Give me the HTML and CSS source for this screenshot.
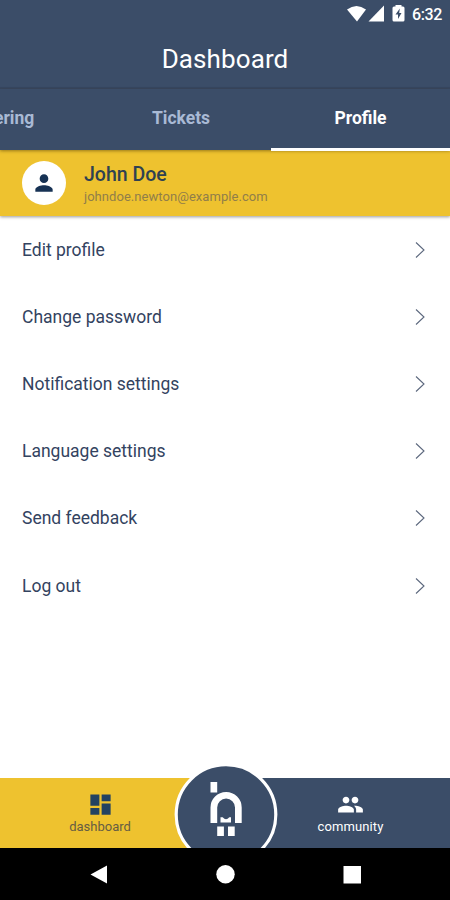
FILE: index.html
```html
<!DOCTYPE html>
<html lang="en">
<head>
<meta charset="utf-8">
<title>Dashboard</title>
<link rel="stylesheet" href="styles.css">
</head>
<body>
<div class="screen">
  <div class="status">
    <svg class="signals" width="60" height="20" viewBox="346 4 60 20">
      <path fill="#fff" d="M347 9.500Q356.500 2.500 366 9.500L357 21.500Z"/>
      <path fill="#fff" d="M384 5.500V21.500H368.500Z"/>
      <path fill="#fff" d="M395.500 6.500V5h6v1.500h1.500q1.500 0 1.500 1.500v12q0 1.500-1.500 1.500h-9q-1.500 0-1.500-1.500V8q0-1.500 1.500-1.500z"/>
      <path fill="#3b4d68" d="M399.800 8.500L395.500 14.500H398V19L401.500 13H399.200Z"/>
    </svg>
    <span class="time">6:32</span>
  </div>
  <header class="title"><h1>Dashboard</h1></header>
  <nav class="tabs">
    <span class="tab tab-cut">ering</span>
    <span class="tab">Tickets</span>
    <span class="tab tab-active">Profile</span>
  </nav>
  <section class="user">
    <div class="avatar">
      <svg width="26" height="26" viewBox="0 0 24 24"><path fill="#173254" d="M12 12c2.210 0 4-1.790 4-4s-1.790-4-4-4-4 1.790-4 4 1.790 4 4 4zm0 2c-2.670 0-8 1.340-8 4v2h16v-2c0-2.660-5.330-4-8-4z"/></svg>
    </div>
    <div class="who">
      <div class="name">John Doe</div>
      <div class="email">johndoe.newton@example.com</div>
    </div>
  </section>
  <main class="menu">
    <div class="row"><span>Edit profile</span><svg class="chev" viewBox="0 0 10 18"><path d="M1 1.500L9 9L1 16.500"/></svg></div>
    <div class="row"><span>Change password</span><svg class="chev" viewBox="0 0 10 18"><path d="M1 1.500L9 9L1 16.500"/></svg></div>
    <div class="row"><span>Notification settings</span><svg class="chev" viewBox="0 0 10 18"><path d="M1 1.500L9 9L1 16.500"/></svg></div>
    <div class="row"><span>Language settings</span><svg class="chev" viewBox="0 0 10 18"><path d="M1 1.500L9 9L1 16.500"/></svg></div>
    <div class="row"><span>Send feedback</span><svg class="chev" viewBox="0 0 10 18"><path d="M1 1.500L9 9L1 16.500"/></svg></div>
    <div class="row"><span>Log out</span><svg class="chev" viewBox="0 0 10 18"><path d="M1 1.500L9 9L1 16.500"/></svg></div>
  </main>
  <footer class="bottom">
    <div class="item item-dash">
      <svg width="27" height="27" viewBox="0 0 24 24"><path fill="#234261" d="M3 13h8V3H3v10zm0 8h8v-6H3v6zm10 0h8V11h-8v10zm0-18v6h8V3h-8z"/></svg>
      <span>dashboard</span>
    </div>
    <div class="item item-comm">
      <svg width="27" height="27" viewBox="0 0 24 24"><path fill="#fff" d="M16 11c1.660 0 2.990-1.340 2.990-3S17.660 5 16 5c-1.660 0-3 1.340-3 3s1.340 3 3 3zm-8 0c1.660 0 2.990-1.340 2.990-3S9.660 5 8 5C6.340 5 5 6.340 5 8s1.340 3 3 3zm0 2c-2.330 0-7 1.170-7 3.500V19h14v-2.500c0-2.330-4.670-3.500-7-3.500zm8 0c-.29 0-.62.020-.97.050 1.160.84 1.970 1.970 1.970 3.450V19h6v-2.500c0-2.330-4.670-3.500-7-3.500z"/></svg>
      <span>community</span>
    </div>
    <svg class="hub" width="104" height="86" viewBox="174 763 104 86">
      <circle cx="226" cy="815.500" r="49.800" fill="#3b4d68" stroke="#fff" stroke-width="3.200"/>
      <path fill="#fff" d="M210.500 783h6.700v10.500h-6.700zM210.500 824V808.500a15.600 15.600 0 0 1 31.200 0V824H235V808.500a8.900 8.900 0 0 0-17.800 0V824zM220.500 823.500V818.300H222.700Q226 822 229.300 818.300H231V823.500ZM217.200 827.500h6.700v9.400h-6.700zM228 827.500h6.700v9.400H228z"/>
    </svg>
  </footer>
  <div class="system">
    <svg width="450" height="52" viewBox="0 848 450 52"><path fill="#fff" d="M90.500 874.500L107 865.500V883.500ZM343.500 866h17.500v17.500h-17.500z"/><circle cx="225.500" cy="874.200" r="9.200" fill="#fff"/></svg>
  </div>
</div>
</body>
</html>
```
FILE: styles.css
```css
* { box-sizing: border-box; }
body { margin: 0; font-family: Roboto, "Liberation Sans", sans-serif; color: #33435f; background: #fff; }
svg { display: block; flex: none; }
.screen { width: 450px; height: 900px; display: flex; flex-direction: column; overflow: hidden; }
.status { height: 28px; background: #3b4d68; display: flex; align-items: center; padding-left: 346px; gap: 6px; color: #fff; }
.time { font-size: 16px; line-height: 28px; padding-top: 1px; font-weight: 500; letter-spacing: -0.4px; }
.title { height: 61px; background: #3b4d68; border-bottom: 2px solid #364661; text-align: center; }
.title h1 { margin: 0; font-size: 26px; line-height: 63px; font-weight: 400; color: #fff; letter-spacing: 0.1px; }
.tabs { height: 61px; flex: none; background: #3b4d68; display: grid; grid-template-columns: 91px 180px 179px; position: relative; box-shadow: 0 1px 3px rgba(70,50,0,.5); z-index: 1; }
.tab { text-align: center; font-size: 17.5px; line-height: 59px; font-weight: 700; color: #a9bad5; }
.tab-cut { text-align: left; margin-left: -6px; }
.tab-active { color: #fff; border-bottom: 3px solid #fff; }
.user { height: 66px; flex: none; background: #eec22f; display: flex; align-items: center; padding: 0 0 1px 22px; gap: 18px; box-shadow: 0 1px 3px rgba(0,0,0,.4); }
.avatar { width: 44px; height: 44px; border-radius: 50%; background: #fff; display: grid; place-items: center; }
.who { padding-top: 4px; }
.name { font-size: 19.5px; line-height: 24px; font-weight: 500; color: #2f4152; }
.email { font-size: 13px; line-height: 20px; color: #917e49; letter-spacing: 0.05px; }
.menu { flex: 1; }
.row { height: 67.2px; display: flex; align-items: center; justify-content: space-between; padding: 0 25px 0 22px; font-size: 17.5px; }
.chev { width: 10px; height: 18px; fill: none; stroke: #5b677d; stroke-width: 1.1; }
.bottom { height: 70px; flex: none; display: grid; grid-template-columns: 225px 225px; position: relative; }
.item { display: flex; flex-direction: column; align-items: center; padding-top: 13px; font-size: 13px; line-height: 18px; }
.item-dash { background: #eec22f; color: #665d43; padding-right: 25px; }
.item-comm { background: #3b4d68; color: #fff; padding-left: 26px; letter-spacing: 0.1px; }
.hub { position: absolute; left: 174px; bottom: 0; }
.system { height: 52px; flex: none; background: #000; }
```
